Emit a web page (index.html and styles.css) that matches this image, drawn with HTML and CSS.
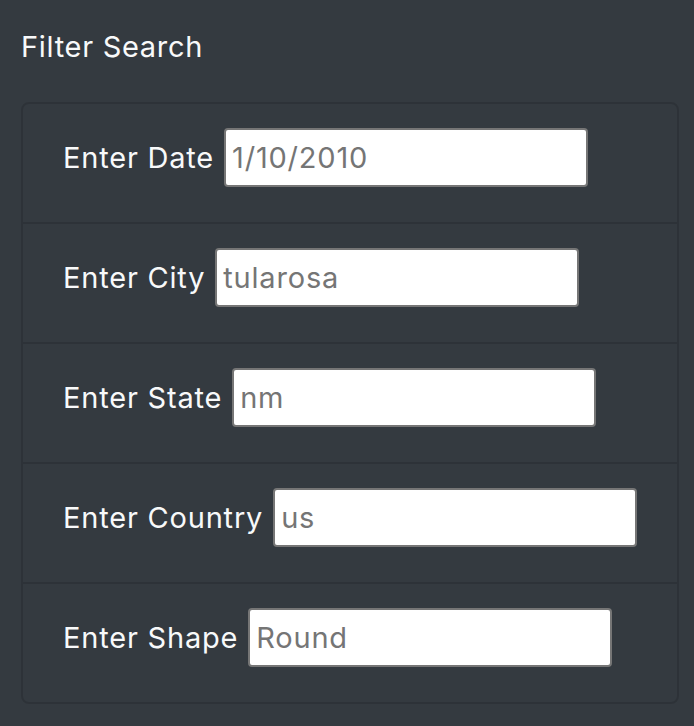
FILE: index.html
```html
<!DOCTYPE html>
<html>
<head>
<meta charset="utf-8">
<link rel="stylesheet" href="styles.css">
</head>
<body>
<div class="panel">
  <h3 class="title">Filter Search</h3>
  <ul class="filters">
    <li class="filter"><label class="lbl">Enter Date</label><input class="field" type="text" placeholder="1/10/2010"></li>
    <li class="filter"><label class="lbl">Enter City</label><input class="field" type="text" placeholder="tularosa"></li>
    <li class="filter"><label class="lbl">Enter State</label><input class="field" type="text" placeholder="nm"></li>
    <li class="filter"><label class="lbl">Enter Country</label><input class="field" type="text" placeholder="us"></li>
    <li class="filter"><label class="lbl">Enter Shape</label><input class="field" type="text" placeholder="Round"></li>
  </ul>
</div>
</body>
</html>
```
FILE: styles.css
```css
html, body {
  margin: 0;
  padding: 0;
  background: #343a40;
  height: 100%;
}
body {
  font-family: Inter, "Liberation Sans", sans-serif;
  color: #f8f9fa;
}
.panel {
  padding: 0 15px 0 21px;
}
.title {
  margin: 0;
  padding-top: 30px;
  height: 102px;
  box-sizing: border-box;
  font-size: 29px;
  letter-spacing: 0.7px;
  font-weight: 400;
  line-height: 34px;
}
.filters {
  list-style: none;
  margin: 0;
  padding: 0;
  border: 2px solid rgba(0,0,0,0.125);
  border-radius: 8px;
}
.filter {
  display: flex;
  align-items: center;
  height: 120px;
  box-sizing: border-box;
  padding: 24px 20px 35px 40px;
  border-top: 2px solid rgba(0,0,0,0.125);
}
.filter:first-child {
  border-top: none;
  height: 118px;
}
.lbl {
  flex-shrink: 0;
  white-space: nowrap;
  font-size: 29px;
  letter-spacing: 0.8px;
  margin-right: 10px;
}
.field {
  flex-shrink: 0;
  width: 364px;
  height: 59px;
  box-sizing: border-box;
  border: 2px solid #767676;
  border-radius: 4px;
  padding: 0 6px;
  font-family: inherit;
  font-size: 29px;
  letter-spacing: 0.8px;
  background: #fff;
  outline: none;
}
.field::placeholder {
  color: #757575;
}
```
